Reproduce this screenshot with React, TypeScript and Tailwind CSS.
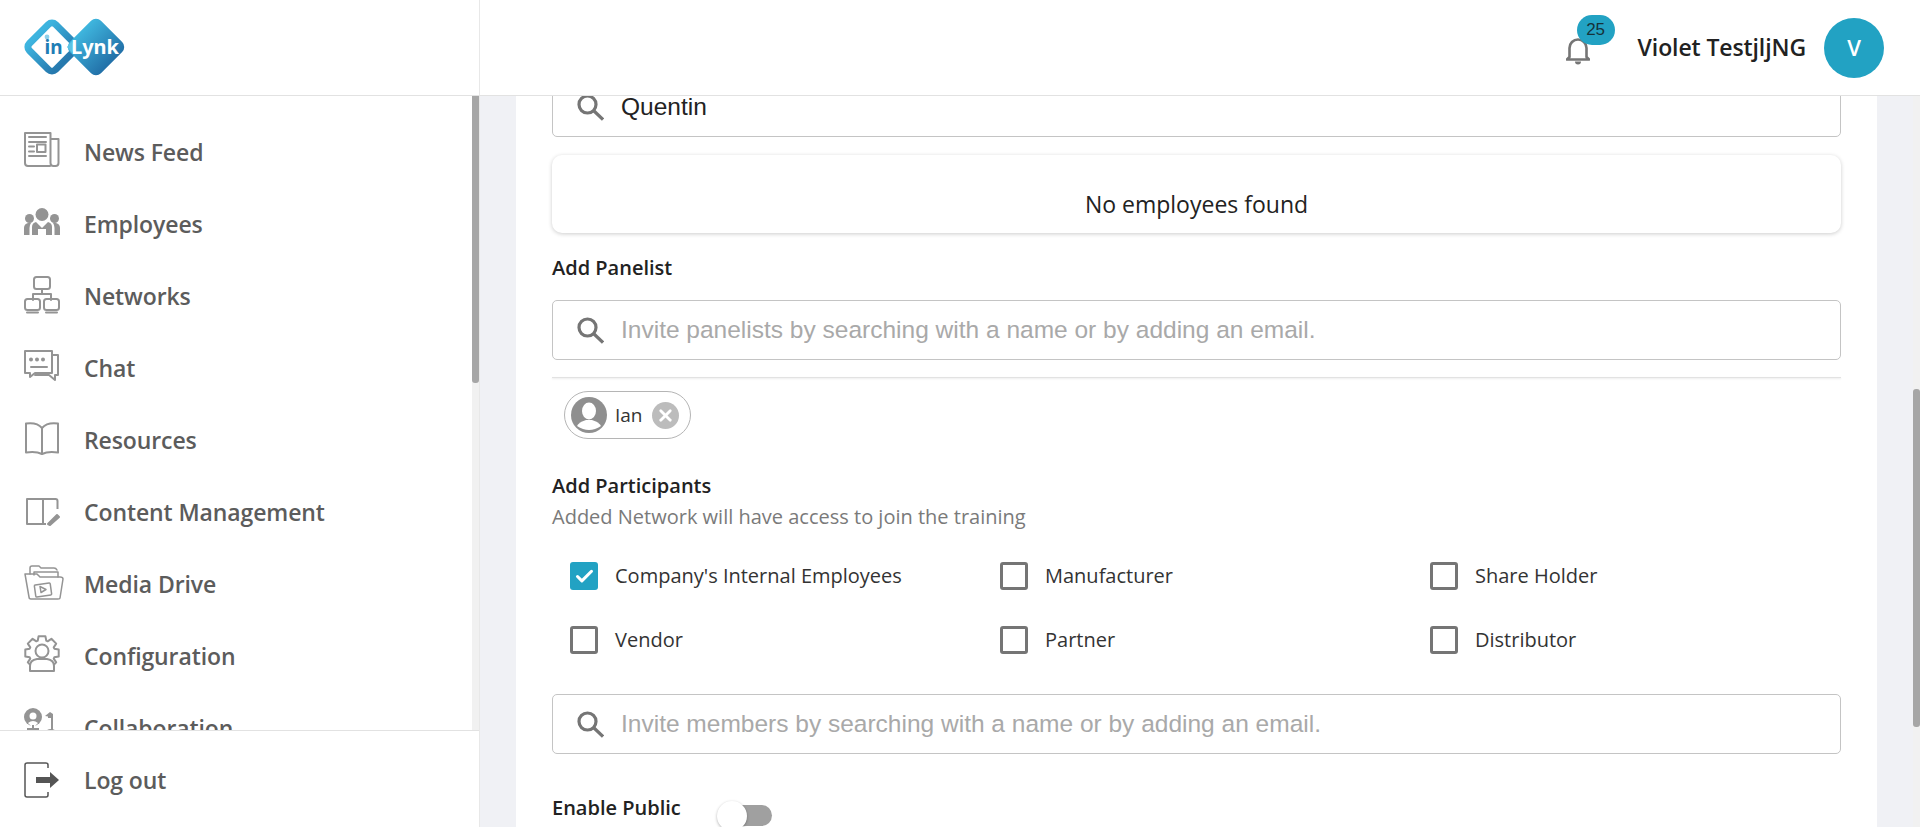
import type { ReactNode } from 'react';
import { Check, X } from 'lucide-react';

const uiFont = "font-['Open_Sans',sans-serif]";
const inputFont = "font-['Liberation_Sans',Arial,sans-serif]";

function Logo() {
  return (
    <svg width="108" height="60" viewBox="0 0 108 60" className="ml-[20px]">
      <defs>
        <linearGradient id="leftMark" x1="0" y1="0" x2="1" y2="0">
          <stop offset="0" stopColor="#3db4df" />
          <stop offset="1" stopColor="#2679ae" />
        </linearGradient>
        <linearGradient id="rightMark" x1="0" y1="0" x2="1" y2="0">
          <stop offset="0" stopColor="#3fb6de" />
          <stop offset="1" stopColor="#2270a8" />
        </linearGradient>
      </defs>
      <rect x="13.500" y="11.500" width="37" height="37" rx="5" transform="rotate(45 32 30)" fill="#fff" stroke="url(#leftMark)" strokeWidth="7" />
      <rect x="54" y="8" width="44" height="44" rx="7" transform="rotate(45 76 30)" fill="url(#rightMark)" />
      <circle cx="27" cy="20" r="2.400" fill="#8fd0ea" />
      <text x="24.500" y="36.500" fontFamily="'Noto Sans',sans-serif" fontWeight="700" fontSize="19" fill="#1e7db5">in</text>
      <path d="M47 30 L52 24 Q55 30 52 36 Z" fill="#5cc3e4" />
      <text x="51" y="36.500" fontFamily="'Noto Sans',sans-serif" fontWeight="700" fontSize="20" fill="#fff">Lynk</text>
    </svg>
  );
}

// gear outline with 8 teeth, left open at the bottom where the shoulders sit
function gearPath(cx: number, cy: number, outer: number, inner: number) {
  const pts: string[] = [];
  for (let t = 0; t < 8; t++) {
    const a = (t * Math.PI) / 4 - Math.PI / 2;
    const w = 0.24;
    const steps: [number, number][] = [
      [inner, a - w - 0.1],
      [outer, a - w + 0.04],
      [outer, a + w - 0.04],
      [inner, a + w + 0.1],
    ];
    for (const [r, ang] of steps) {
      pts.push(`${(cx + r * Math.cos(ang)).toFixed(1)} ${(cy + r * Math.sin(ang)).toFixed(1)}`);
    }
  }
  return `M${pts.join('L')}Z`;
}

// sidebar icons, drawn on a 36 box, some spill out of it like in the design
const stroke = { fill: 'none', stroke: '#949494', strokeWidth: 2, strokeLinecap: 'round', strokeLinejoin: 'round' } as const;

const navIcons: Record<string, ReactNode> = {
  news: (
    <g {...stroke}>
      <path d="M26 32H4a3 3 0 0 1-3-3V-1h25.500v30a3 3 0 0 0 3 3h2a3 3 0 0 0 3-3V5h-8" />
      <path d="M5 3h17M5 8h17M5 12.500h5M5 17.500h5M5 22h17" />
      <rect x="13" y="10.500" width="8.500" height="7.500" />
    </g>
  ),
  employees: (
    <g fill="#949494">
      <circle cx="18" cy="8.500" r="6.500" />
      <circle cx="5.500" cy="12.500" r="4.500" />
      <circle cx="30.500" cy="12.500" r="4.500" />
      <path d="M0 29v-7q0-4 4-5h3q-1.500 2-1.500 5v7zM36 29v-7q0-4-4-5h-3q1.500 2 1.500 5v7z" />
      <path d="M8 29v-8q0-4 4-5l6 6 6-6q4 1 4 5v8h-6v-6h-8v6z" />
    </g>
  ),
  networks: (
    <g {...stroke}>
      <rect x="10" y="-1" width="16" height="12" rx="2.500" />
      <path d="M18 11v5M9 22v-6h18v6" />
      <rect x="1" y="21" width="15" height="11" rx="2.500" />
      <rect x="20" y="21" width="15" height="11" rx="2.500" />
      <path d="M3 34.500h11M22 34.500h11" />
    </g>
  ),
  chat: (
    <g {...stroke}>
      <path d="M28 1H1v22h5v4l5-4h17z" />
      <path d="M28 5h6v20h-3v5l-6-5H11" />
      <circle cx="7" cy="9.500" r="1" fill="#949494" />
      <circle cx="13" cy="9.500" r="1" fill="#949494" />
      <circle cx="19" cy="9.500" r="1" fill="#949494" />
      <path d="M7 17h16" />
    </g>
  ),
  resources: (
    <g {...stroke}>
      <path d="M18 6Q13 0 2 1.500v29Q12 29 18 32q6-3 16-1.500v-29Q23 0 18 6zM18 6v26" />
    </g>
  ),
  content: (
    <g {...stroke} strokeLinecap="butt">
      <path d="M19 31V5M19 5H3v25h16M19 5h12.500q2 0 2 2v8M19 30h3" />
      <path d="M24 30l9-9 2 2-9 8z" fill="#949494" />
    </g>
  ),
  media: (
    <g {...stroke} strokeWidth="1.500">
      <path d="M6 8V2q0-2 2-2h7l2 2h13q2 0 3 2" />
      <path d="M10 9V6h24v5" />
      <path d="M1 9h12l3 3h20q3 0 3 2l-3 19q0 1-2 1H7q-2 0-2-2z" transform="translate(0 -1)" />
      <rect x="11" y="18" width="16" height="12" rx="1" transform="rotate(-8 19 24)" />
      <path d="M16 20.500l6 3-5 3z" />
    </g>
  ),
  config: (
    <g {...stroke}>
      <path d={gearPath(18, 15, 17, 13)} />
      <circle cx="18" cy="13" r="6.500" fill="#fff" />
      <path d="M6 33v-5q0-6 7-7h10q7 1 7 7v5z" fill="#fff" />
    </g>
  ),
  collab: (
    <g>
      <circle cx="9" cy="7" r="9" fill="#949494" />
      <circle cx="9" cy="6" r="3.500" fill="#fff" />
      <path d="M4 13q5-4 10 0l-3 3h-4z" fill="#fff" />
      <path d="M8 15h2v9H8zM3 18h12v2H3z" fill="#949494" />
      <path d="M26 2l-5 4 3 .500V8h3v12h2V4z" fill="#949494" />
      <circle cx="27" cy="27" r="8" fill="#949494" />
    </g>
  ),
  logout: (
    <g>
      <path d="M24 6V3a2 2 0 0 0-2-2H3a2 2 0 0 0-2 2v30a2 2 0 0 0 2 2h19a2 2 0 0 0 2-2v-3" fill="none" stroke="#555" strokeWidth="1.500" />
      <path d="M12 15h14v-5l9 8-9 8v-5H12z" fill="#555" />
    </g>
  ),
};

const navItems = [
  { label: 'News Feed', icon: 'news' },
  { label: 'Employees', icon: 'employees' },
  { label: 'Networks', icon: 'networks' },
  { label: 'Chat', icon: 'chat' },
  { label: 'Resources', icon: 'resources' },
  { label: 'Content Management', icon: 'content' },
  { label: 'Media Drive', icon: 'media' },
  { label: 'Configuration', icon: 'config' },
  { label: 'Collaboration', icon: 'collab' },
];

function NavRow({ label, icon }: { label: string; icon: string }) {
  return (
    <div className="flex h-[72px] shrink-0 items-center pl-[24px]">
      <svg width="36" height="36" viewBox="0 0 36 36" className="shrink-0 overflow-visible">
        {navIcons[icon]}
      </svg>
      <span className="ml-[24px] text-[23px] font-semibold tracking-[-0.1px] text-[#5c5c5c]">{label}</span>
    </div>
  );
}

function SearchGlass() {
  return (
    <svg width="28" height="28" viewBox="0 0 28 28" className="shrink-0">
      <circle cx="11.500" cy="11.500" r="8.500" fill="none" stroke="#757575" strokeWidth="3.200" />
      <path d="M17.500 17.500L27 26.500" fill="none" stroke="#757575" strokeWidth="3.200" />
    </svg>
  );
}

function SearchInput({ placeholder, value }: { placeholder: string; value?: string }) {
  return (
    <div className="flex h-[60px] shrink-0 items-center rounded-[5px] border border-[#c4c4c4] bg-white pl-[23px]">
      <SearchGlass />
      <input
        readOnly
        value={value}
        placeholder={placeholder}
        className={`ml-[17px] w-full bg-transparent text-[24.500px] text-[#222] outline-none placeholder:text-[#a9a9a9] ${inputFont}`}
      />
    </div>
  );
}

const participants = [
  { label: "Company's Internal Employees", checked: true },
  { label: 'Manufacturer', checked: false },
  { label: 'Share Holder', checked: false },
  { label: 'Vendor', checked: false },
  { label: 'Partner', checked: false },
  { label: 'Distributor', checked: false },
];

export default function App() {
  return (
    <div className={`flex h-[827px] flex-col overflow-hidden bg-white ${uiFont}`}>
      {/* Top bar */}
      <header className="flex h-[96px] shrink-0 border-b border-[#e2e2e2] bg-white">
        <div className="flex w-[480px] shrink-0 items-center border-r border-[#e8e8e8] pb-[2px]">
          <Logo />
        </div>
        <div className="flex flex-1 items-center justify-end pr-[36px]">
          <div className="relative mr-[48px] h-[30px] w-[24px] translate-y-[2px]">
            <svg width="24" height="30" viewBox="0 0 24 30">
              <path d="M3.500 22V13a8.500 8.500 0 0 1 17 0v9l2.500 2.500H1z" fill="none" stroke="#757575" strokeWidth="2.600" strokeLinejoin="round" />
              <path d="M9 26.500h6a3 3 0 0 1-6 0z" fill="#757575" />
            </svg>
            <span className={`absolute left-[11px] top-[-20px] flex h-[30px] w-[38px] items-center justify-center rounded-full bg-[#22a2c3] text-[17px] text-[#16323a] ${inputFont}`}>25</span>
          </div>
          <span className="text-[23px] font-semibold tracking-[-0.1px] text-[#222]">Violet TestjljNG</span>
          <div className="ml-[18px] flex h-[60px] w-[60px] items-center justify-center rounded-full bg-[#22a2c3] text-[22px] font-semibold text-white">V</div>
        </div>
      </header>

      <div className="flex min-h-0 flex-1">
        {/* Sidebar */}
        <aside className="flex w-[480px] shrink-0 flex-col border-r border-[#e8e8e8]">
          <div className="flex min-h-0 flex-1">
            <nav className="flex min-h-0 flex-1 flex-col overflow-hidden pt-[20px]">
              {navItems.map((item) => (
                <NavRow key={item.label} {...item} />
              ))}
            </nav>
            <div className="w-[7px] bg-[#f1f1f1]">
              <div className="h-[287px] rounded-b-[3px] bg-[#a6a6a6]" />
            </div>
          </div>
          <div className="h-[97px] shrink-0 border-t border-[#e2e2e2] pt-[13px]">
            <NavRow label="Log out" icon="logout" />
          </div>
        </aside>

        {/* Form area */}
        <main className="flex min-w-0 flex-1 bg-[#f0f1f5]">
          <div className="ml-[36px] w-[1361px] shrink-0 overflow-hidden bg-white">
            <div className="-mt-[19px] flex flex-col px-[36px]">
              <SearchInput placeholder="" value="Quentin" />
              <div className="mt-[18px] flex h-[78px] items-end justify-center rounded-[10px] bg-white pb-[12px] text-[23px] text-[#222] shadow-[0_1px_4px_rgba(0,0,0,0.2)]">
                No employees found
              </div>

              <h3 className="mt-[23px] text-[20px] font-semibold leading-[24px] text-[#222]">Add Panelist</h3>
              <div className="mt-[20px]">
                <SearchInput placeholder="Invite panelists by searching with a name or by adding an email." />
              </div>
              <div className="mt-[17px] h-px bg-[#e2e2e2] shadow-[0_1px_2px_rgba(0,0,0,0.1)]" />

              <div className="ml-[12px] mt-[13px] flex h-[48px] w-[127px] items-center rounded-full border border-[#b5b5b5] pl-[6px]">
                <svg width="36" height="36" viewBox="0 0 36 36" className="shrink-0">
                  <circle cx="18" cy="18" r="18" fill="#8f8f8f" />
                  <ellipse cx="18" cy="14" rx="7" ry="8.500" fill="#fff" />
                  <path d="M6 29q2-4 9-6h6q7 2 9 6-12 8-24 0z" fill="#fff" />
                </svg>
                <span className="ml-[8px] text-[19px] text-[#333]">Ian</span>
                <span className="ml-[9px] flex h-[27px] w-[27px] items-center justify-center rounded-full bg-[#bcbcbc]">
                  <X size={19} strokeWidth={3.500} color="#fff" />
                </span>
              </div>

              <h3 className="mt-[35px] text-[20px] font-semibold leading-[24px] text-[#222]">Add Participants</h3>
              <p className="mt-[7px] text-[20px] leading-[24px] text-[#7a7a7a]">Added Network will have access to join the training</p>

              <div className="mt-[33px] grid grid-cols-[430px_430px_1fr] gap-y-[36px] pl-[18px]">
                {participants.map(({ label, checked }) => (
                  <label key={label} className="flex h-[28px] items-center">
                    {checked ? (
                      <span className="flex h-[28px] w-[28px] shrink-0 items-center justify-center rounded-[3px] bg-[#22a2c3]">
                        <Check size={21} strokeWidth={3.500} color="#fff" />
                      </span>
                    ) : (
                      <span className="h-[28px] w-[28px] shrink-0 rounded-[3px] border-[3px] border-[#757575]" />
                    )}
                    <span className="ml-[17px] text-[20px] text-[#333]">{label}</span>
                  </label>
                ))}
              </div>

              <div className="mt-[40px]">
                <SearchInput placeholder="Invite members by searching with a name or by adding an email." />
              </div>

              <div className="mt-[42px] flex items-start">
                <span className="text-[20px] font-semibold leading-[24px] text-[#222]">Enable Public</span>
                <span className="relative ml-[45px] mt-[9px] h-[21px] w-[46px] rounded-full bg-[#a0a0a0]">
                  <span className="absolute -left-[9px] -top-[4px] h-[30px] w-[30px] rounded-full bg-white shadow-[0_1px_3px_rgba(0,0,0,0.3)]" />
                </span>
              </div>
            </div>
          </div>
          <div className="flex-1" />
          <div className="w-[7px] bg-[#f1f1f1] pt-[293px]">
            <div className="h-[338px] rounded-[3px] bg-[#a6a6a6]" />
          </div>
        </main>
      </div>
    </div>
  );
}
